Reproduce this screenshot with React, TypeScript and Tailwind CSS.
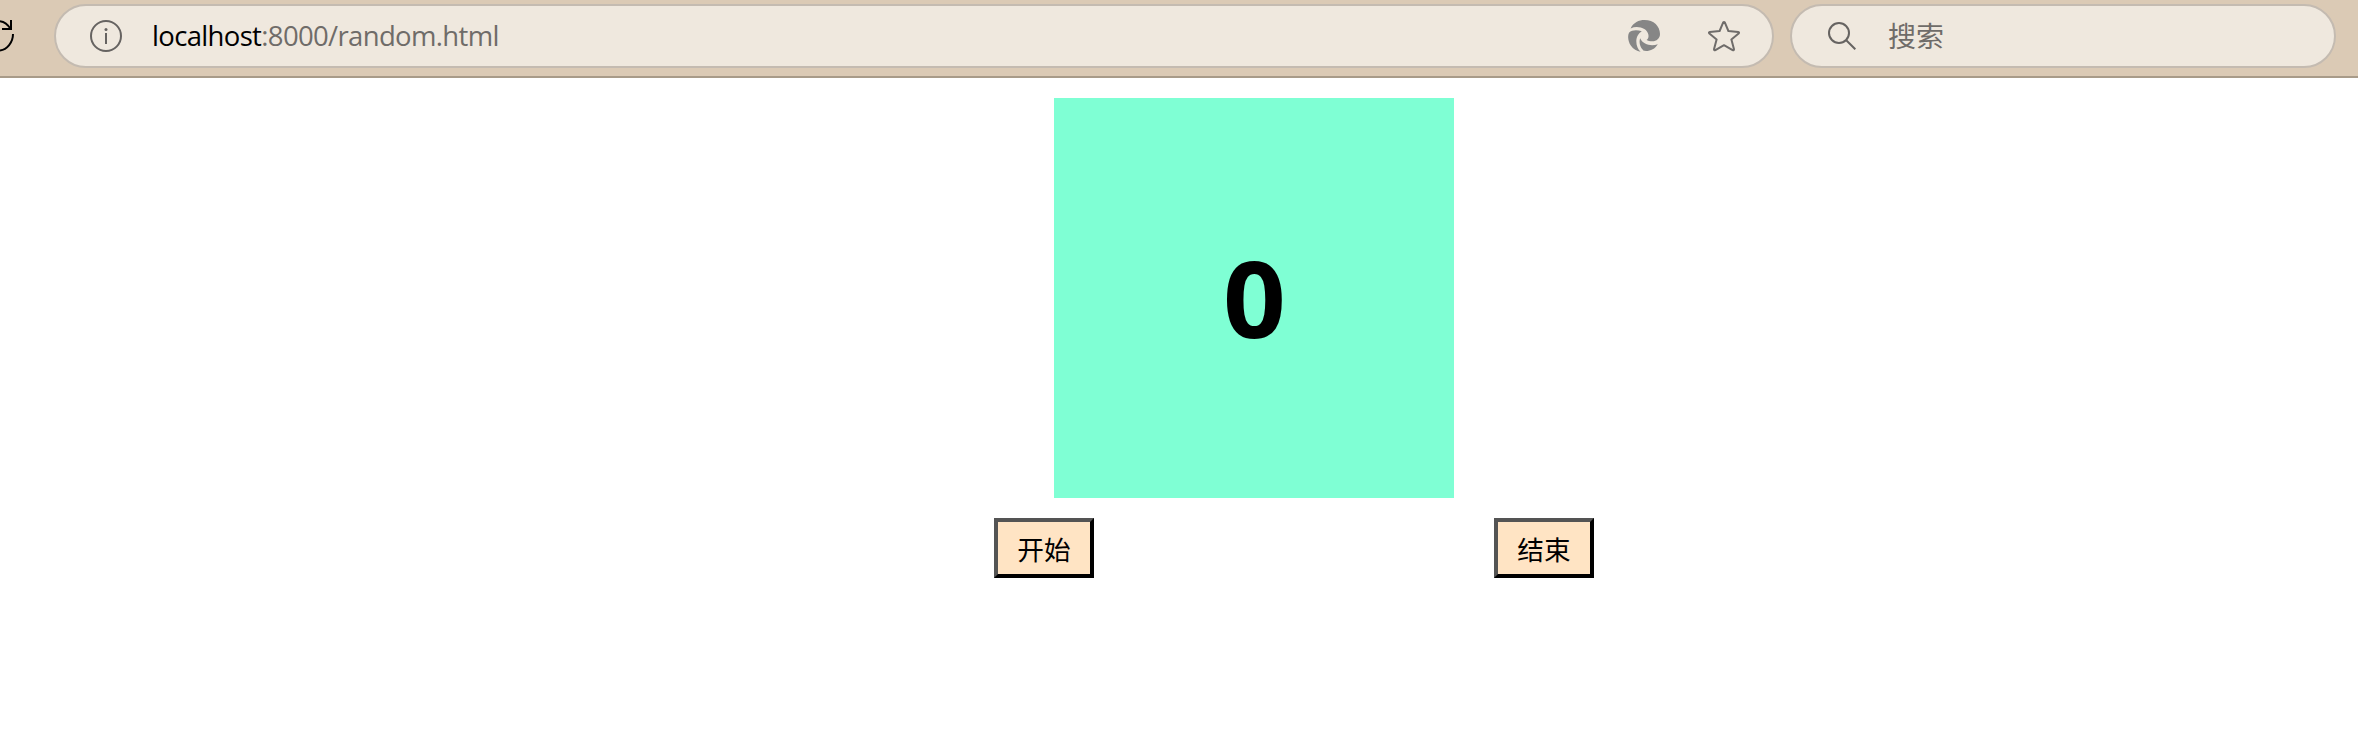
import React from "react";

function RefreshIcon() {
  return (
    <svg className="h-9 w-[18px] shrink-0" viewBox="0 0 18 36" fill="none" stroke="#000" strokeWidth="2">
      <path d="M0 5.2 C4.5 5.8 8 8.6 10.6 13" />
      <path d="M11 4 V13 H2" />
      <path d="M13 18 C13 26.5 7 33.4 0 34.4" />
    </svg>
  );
}

function InfoIcon() {
  return (
    <svg className="h-8 w-8" viewBox="0 0 32 32" fill="none" stroke="#666361" strokeWidth="2">
      <circle cx="16" cy="16" r="15" />
      <path d="M16 13 V24" />
      <circle cx="16" cy="9.5" r="1.5" fill="#666361" stroke="none" />
    </svg>
  );
}

function SwirlIcon() {
  return (
    <svg className="h-8 w-8" viewBox="0 0 32 32" fill="#868686">
      <path d="M2.6 8.4 C5.5 2.5 10.8 0 16.5 0 C25.8 0 32 6.2 32 14 C32 18.6 28.4 21.3 24.5 21.3 C21.8 21.3 19.9 20.8 18.6 19.9 C20.3 18.6 20.8 17 20.4 14.7 C19.3 8.2 9.7 5.2 2.6 8.4 Z" />
      <path d="M13.8 11.3 C9.5 10 4 9.7 1 12.8 C-0.8 16.5 0.4 22 2.8 25.5 C5.2 29 8.8 31.4 12.6 31.7 C7.1 26.8 6.3 15.7 13.8 11.3 Z" />
      <path d="M12.2 18.3 C10.7 22.3 11.9 27.3 15.7 30.8 C21.3 31.6 26.6 29.5 29.8 24.2 C23.8 26.4 15.2 25.2 12.2 18.3 Z" />
    </svg>
  );
}

function StarIcon() {
  return (
    <svg className="h-8 w-8" viewBox="0 0 32 32" fill="none" stroke="#6f6c6a" strokeWidth="2" strokeLinejoin="round">
      <path d="M15.2 2.4 Q16 1.4 16.8 2.4 L20.4 11 L30.2 11.9 Q31.6 12.3 30.6 13.5 L23.4 19.4 L26 29.2 Q26 30.8 24.6 30.2 L16 25.2 L7.4 30.2 Q6 30.8 6 29.2 L8.6 19.4 L1.4 13.5 Q0.4 12.3 1.8 11.9 L11.6 11 Z" />
    </svg>
  );
}

function SearchIcon() {
  return (
    <svg className="h-7 w-7" viewBox="0 0 28 28" fill="none" stroke="#666361" strokeWidth="2">
      <circle cx="11" cy="11" r="10" />
      <path d="M18 18 L27.3 27.3" />
    </svg>
  );
}

function ActionButton({ label }: { label: string }) {
  return (
    <button className="flex h-[60px] w-[100px] items-center justify-center border-4 border-t-[#545454] border-r-black border-b-black border-l-[#545454] bg-[#ffe4c4] text-[26.67px] leading-none text-black">
      <span className="pt-[4px]">{label}</span>
    </button>
  );
}

export default function App() {
  return (
    <div className="flex h-[735px] w-[2358px] flex-col overflow-hidden bg-white font-['Open_Sans','Noto_Sans_CJK_SC',sans-serif]">
      <header className="flex h-[78px] shrink-0 border-b-2 border-[#a89b89] bg-[#dbcab5] pt-1">
        <div className="w-[54px] pt-3">
          <RefreshIcon />
        </div>
        <div className="flex h-16 w-[1720px] items-center rounded-full border-2 border-[#c4bbb1] bg-[#efe8de] pr-8 pl-[34px]">
          <InfoIcon />
          <div className="ml-[30px] text-[27.5px] leading-none tracking-[-0.66px] text-[#6f6c69]">
            <span className="text-black">localhost</span>:8000/random.html
          </div>
          <div className="ml-auto flex gap-12">
            <SwirlIcon />
            <StarIcon />
          </div>
        </div>
        <div className="ml-4 flex h-16 w-[546px] items-center rounded-full border-2 border-[#c4bbb1] bg-[#efe8de] pl-9">
          <SearchIcon />
          <span className="ml-8 text-[28px] leading-none text-[#6f6c69]">搜索</span>
        </div>
      </header>
      <main className="flex flex-col pt-5">
        <div className="ml-[1054px] flex h-[400px] w-[400px] items-center justify-center bg-[#7fffd4]">
          <span className="scale-x-103 pb-0.5 text-[106.67px] leading-none font-bold text-black">0</span>
        </div>
        <div className="mt-5 ml-[994px] flex gap-[400px]">
          <ActionButton label="开始" />
          <ActionButton label="结束" />
        </div>
      </main>
    </div>
  );
}
